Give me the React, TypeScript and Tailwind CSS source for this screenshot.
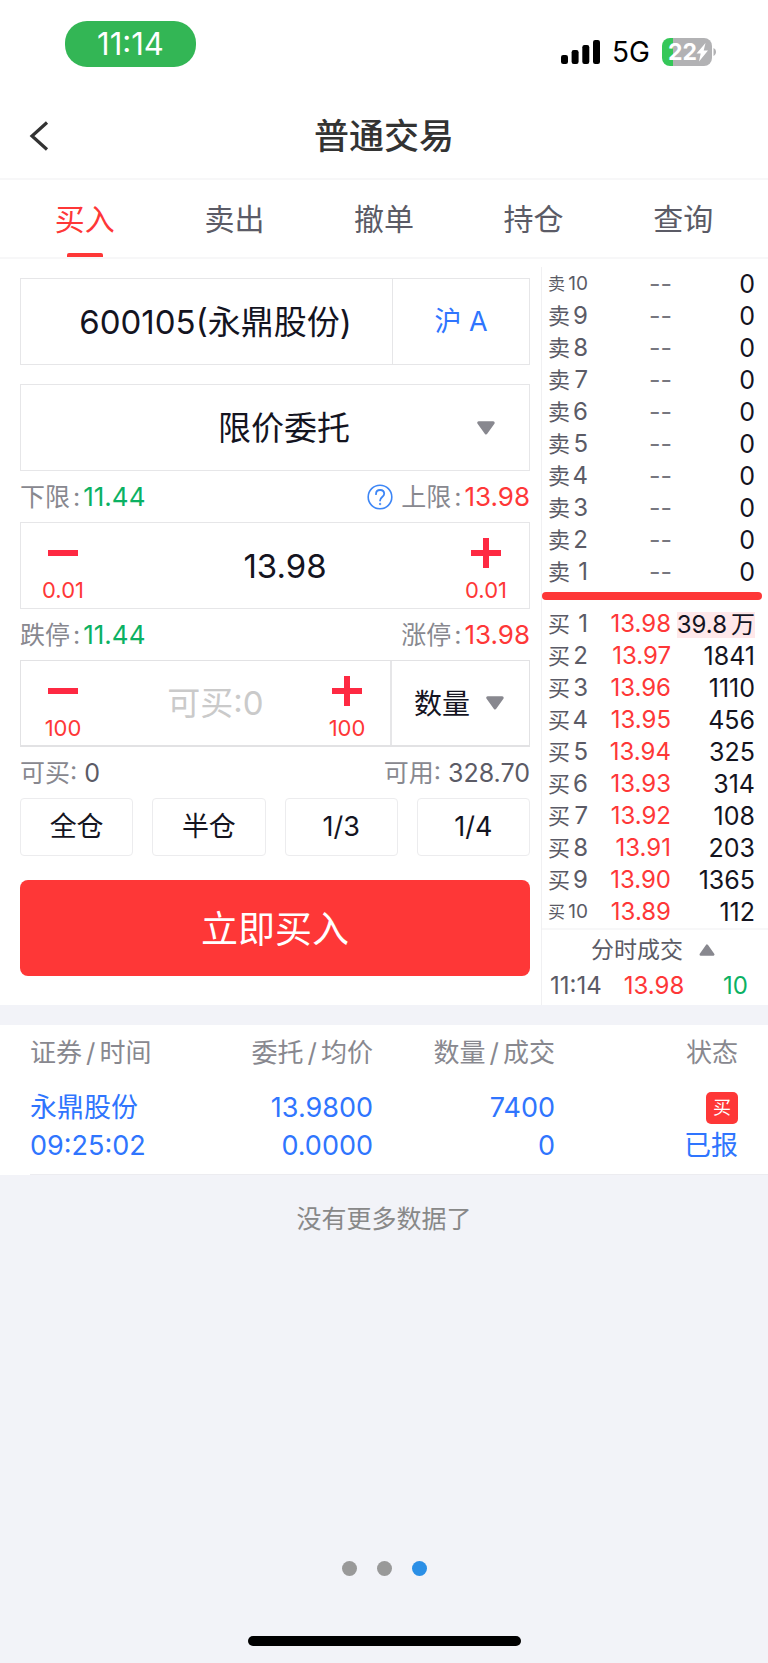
import React, { useState } from 'react';

interface BookRow {
  label: string;
  level: number;
  price: string;
  volume: string;
}

const TABS = ['买入', '卖出', '撤单', '持仓', '查询'];
const POSITIONS = ['全仓', '半仓', '1/3', '1/4'];

const SELL_ROWS: BookRow[] = [10, 9, 8, 7, 6, 5, 4, 3, 2, 1].map((level) => ({
  label: '卖',
  level,
  price: '--',
  volume: '0',
}));

const BUY_ROWS: BookRow[] = [
  { label: '买', level: 1, price: '13.98', volume: '39.8万' },
  { label: '买', level: 2, price: '13.97', volume: '1841' },
  { label: '买', level: 3, price: '13.96', volume: '1110' },
  { label: '买', level: 4, price: '13.95', volume: '456' },
  { label: '买', level: 5, price: '13.94', volume: '325' },
  { label: '买', level: 6, price: '13.93', volume: '314' },
  { label: '买', level: 7, price: '13.92', volume: '108' },
  { label: '买', level: 8, price: '13.91', volume: '203' },
  { label: '买', level: 9, price: '13.90', volume: '1365' },
  { label: '买', level: 10, price: '13.89', volume: '112' },
];

const Triangle: React.FC<{ className?: string }> = ({ className }) => (
  <svg viewBox="0 0 18 14" className={className} aria-hidden="true">
    <path d="M1.8 1.8h14.4L9 12z" fill="#88888f" stroke="#88888f" strokeWidth="3" strokeLinejoin="round" />
  </svg>
);

const StatusBar: React.FC = () => (
  <div className="flex h-[90px] items-start justify-between pl-[65px] pr-[52px]">
    <div className="mt-[21px] flex h-[46px] w-[131px] items-center justify-center rounded-[22px] bg-[#33b655] text-[31px] leading-8 text-white">
      11:14
    </div>
    <div className="mt-[34px] flex h-9 items-center">
      <svg viewBox="0 0 39 24" className="h-6 w-[39px]" aria-hidden="true">
        <rect x="0" y="15" width="7" height="9" rx="2.2" />
        <rect x="10.6" y="10" width="7" height="14" rx="2.2" />
        <rect x="21.3" y="5" width="7" height="19" rx="2.2" />
        <rect x="32" y="0" width="7" height="24" rx="2.2" />
      </svg>
      <span className="ml-3 text-[28px] leading-8 text-black">5G</span>
      <div className="relative ml-3 h-7 w-[54px]">
        <svg viewBox="0 0 54 28" className="h-7 w-[54px]" aria-hidden="true">
          <path d="M8 0h3v28H8a8 8 0 0 1-8-8V8a8 8 0 0 1 8-8z" fill="#35c759" />
          <path d="M11 0h31a8 8 0 0 1 8 8v12a8 8 0 0 1-8 8H11z" fill="#b2b2b4" />
          <path d="M51.5 10c1.6.8 2.5 2.2 2.5 4s-.9 3.2-2.5 4z" fill="#b2b2b4" />
          <path d="M43.5 5 34.5 15.5h4.2L37 23.5l9-11h-4.3z" fill="#fff" />
        </svg>
        <span className="absolute left-[6px] top-0 text-[23px] font-bold leading-7 text-white">22</span>
      </div>
    </div>
  </div>
);

interface StepButtonProps {
  step: string;
  plus?: boolean;
  onClick: () => void;
}

const StepButton: React.FC<StepButtonProps> = ({ step, plus = false, onClick }) => (
  <button
    type="button"
    onClick={onClick}
    aria-label={`${plus ? '增加' : '减少'} ${step}`}
    className={`flex shrink-0 flex-col items-center pt-[15px] text-[#fe3737] ${plus ? 'w-[86px]' : 'w-[84px]'}`}
  >
    <svg viewBox="0 0 30 30" className="size-[30px]" fill="#fe2942" aria-hidden="true">
      <rect x="0" y="12" width="30" height="6" />
      {plus && <rect x="12" y="0" width="6" height="30" />}
    </svg>
    <span className="mt-2 text-[22px] leading-7">{step}</span>
  </button>
);

interface LimitProps {
  label: string;
  value: string;
  valueClass: string;
}

const Limit: React.FC<LimitProps> = ({ label, value, valueClass }) => (
  <span className="flex">
    {label}
    <span className="mx-[3px]">:</span>
    <span className={`text-[26px] ${valueClass}`}>{value}</span>
  </span>
);

const PairHeading: React.FC<{ first: string; second: string }> = ({ first, second }) => (
  <>
    {first}
    <span className="mx-1">/</span>
    {second}
  </>
);

const BookTable: React.FC<{ rows: BookRow[]; caption: string }> = ({ rows, caption }) => (
  <table className="w-full table-fixed whitespace-nowrap" aria-label={caption}>
    <tbody>
      {rows.map((row) => (
        <tr key={row.level} className="h-8">
          <th scope="row" className="w-[46px] p-0 pl-[6px] font-normal text-[#5b5b66]">
            {row.level === 10 ? (
              <span className="flex items-center justify-between text-[19px] leading-8">
                <span className="text-[17px]">{row.label}</span>
                {row.level}
              </span>
            ) : (
              <span className="flex items-center justify-between text-[24px] leading-8">
                <span className="text-[22px]">{row.label}</span>
                {row.level}
              </span>
            )}
          </th>
          {row.price === '--' ? (
            <td className="p-0 pl-[61px] text-left text-[25px] leading-8 text-[#77777f]">--</td>
          ) : (
            <td className="p-0 text-right text-[24px] leading-8 text-[#fe3737]">{row.price}</td>
          )}
          <td className="w-[97px] p-0 pr-[13px] text-right text-[25px] leading-8 text-[#14141f]">
            {row.volume.endsWith('万') ? (
              <span className="inline-block bg-[#ffe8ea] text-[24px] leading-[26px]">
                {row.volume.slice(0, -1)}
                <span className="ml-1">万</span>
              </span>
            ) : (
              row.volume
            )}
          </td>
        </tr>
      ))}
    </tbody>
  </table>
);

const OrderForm: React.FC = () => {
  const [code, setCode] = useState('600105(永鼎股份)');
  const [price, setPrice] = useState('13.98');
  const [amount, setAmount] = useState('');

  const changePrice = (diff: number) => setPrice((Number(price) + diff).toFixed(2));
  const changeAmount = (diff: number) => setAmount(String(Math.max(0, Number(amount) + diff)));

  return (
    <form className="pb-[29px] pl-5 pr-[11px] pt-[19px]" onSubmit={(e) => e.preventDefault()}>
      <div className="flex h-[87px] border border-[#e6e6e8]">
        <input
          aria-label="证券代码"
          value={code}
          onChange={(e) => setCode(e.target.value)}
          className="min-w-0 flex-1 pl-[18px] pt-[2px] text-center text-[33px] text-[#14141f] outline-none"
        />
        <button type="button" className="w-[137px] border-l border-[#e6e6e8] pt-[2px] text-[27px] text-[#2f75fe]">
          沪 A
        </button>
      </div>

      <div className="mt-[19px] flex h-[87px] items-center border border-[#e6e6e8]">
        <select
          aria-label="委托方式"
          className="h-full min-w-0 flex-1 appearance-none pl-[74px] pt-[2px] text-center text-[33px] text-[#14141f] outline-none [text-align-last:center]"
        >
          <option>限价委托</option>
        </select>
        <Triangle className="ml-1 mr-[34px] h-[14px] w-[18px]" />
      </div>

      <div className="flex h-[51px] items-center justify-between text-[25px] leading-8 text-[#88888f]">
        <Limit label="下限" value="11.44" valueClass="text-[#0bb163]" />
        <span className="flex items-center">
          <button type="button" aria-label="说明" className="mr-2">
            <svg viewBox="0 0 26 26" className="size-[26px]" fill="none" stroke="#3d86f6" aria-hidden="true">
              <circle cx="13" cy="13" r="11.8" strokeWidth="1.6" />
              <path
                d="M9 10.2c0-2.5 1.7-4.2 4.1-4.2s4.1 1.6 4.1 3.8c0 3.2-4.1 3.3-4.1 6.7"
                strokeWidth="1.8"
                strokeLinecap="round"
              />
              <circle cx="13.1" cy="20" r="0.8" fill="#3d86f6" strokeWidth="0.8" />
            </svg>
          </button>
          <Limit label="上限" value="13.98" valueClass="text-[#fe3737]" />
        </span>
      </div>

      <div className="flex h-[87px] border border-[#e6e6e8]">
        <StepButton step="0.01" onClick={() => changePrice(-0.01)} />
        <input
          aria-label="委托价格"
          value={price}
          onChange={(e) => setPrice(e.target.value)}
          className="min-w-0 flex-1 pl-[22px] pt-[2px] text-center text-[33px] text-[#14141f] outline-none"
        />
        <StepButton step="0.01" plus onClick={() => changePrice(0.01)} />
      </div>

      <div className="flex h-[51px] items-center justify-between text-[25px] leading-8 text-[#88888f]">
        <Limit label="跌停" value="11.44" valueClass="text-[#0bb163]" />
        <Limit label="涨停" value="13.98" valueClass="text-[#fe3737]" />
      </div>

      <div className="flex h-[87px] border border-b-2 border-[#e2e2e4]">
        <StepButton step="100" onClick={() => changeAmount(-100)} />
        <input
          aria-label="委托数量"
          placeholder="可买:0"
          value={amount}
          onChange={(e) => setAmount(e.target.value)}
          className="min-w-0 flex-1 pl-[22px] pt-[2px] text-center text-[33px] text-[#14141f] outline-none placeholder:text-[#cacaca]"
        />
        <StepButton step="100" plus onClick={() => changeAmount(100)} />
        <div className="flex w-[139px] items-center border-l-2 border-[#e6e6e8] pl-[22px]">
          <select
            aria-label="委托单位"
            className="h-full w-[64px] appearance-none pt-[2px] text-[28px] text-[#14141f] outline-none"
          >
            <option>数量</option>
          </select>
          <Triangle className="ml-2 h-[14px] w-[18px]" />
        </div>
      </div>

      <div className="flex h-[51px] items-center justify-between text-[25px] leading-8 text-[#88888f]">
        <span>
          可买: <span className="text-[#5b5b66]">0</span>
        </span>
        <span>
          可用: <span className="text-[#5b5b66]">328.70</span>
        </span>
      </div>

      <div className="grid grid-cols-4 gap-[19px]">
        {POSITIONS.map((position) => (
          <button
            key={position}
            type="button"
            className="h-[58px] rounded-[4px] border border-[#ececee] text-[27px] leading-8 text-[#14141f]"
          >
            {position}
          </button>
        ))}
      </div>

      <button type="submit" className="mt-6 h-24 w-full rounded-[8px] bg-[#fe3737] pt-1 text-[37px] text-white">
        立即买入
      </button>
    </form>
  );
};

const App: React.FC = () => {
  const [activeTab, setActiveTab] = useState(TABS[0]);

  return (
    <div className="flex min-h-screen flex-col bg-[#f2f3f8] font-['Inter','Noto_Sans_CJK_SC',sans-serif]">
      <div className="bg-white">
        <StatusBar />

        <header className="grid h-[90px] grid-cols-[80px_1fr_80px] items-center border-b-2 border-[#f7f7f8] pt-1">
          <button type="button" aria-label="返回" className="pl-[29px]">
            <svg viewBox="0 0 20 30" className="h-[30px] w-5" fill="none" stroke="#333" strokeWidth="3.2" aria-hidden="true">
              <path d="M18 1.5 3 15l15 13.5" />
            </svg>
          </button>
          <h1 className="text-center text-[35px] font-medium leading-10 text-[#333]">普通交易</h1>
        </header>

        <nav className="flex h-[79px] border-b-2 border-[#f7f7f8] px-[10px]">
          {TABS.map((tab) => (
            <button
              key={tab}
              type="button"
              onClick={() => setActiveTab(tab)}
              className={`flex flex-1 flex-col items-center text-[30px] ${
                tab === activeTab ? 'text-[#fe3737]' : 'text-[#5b5b66]'
              }`}
            >
              <span className="flex flex-1 items-center pt-[6px]">{tab}</span>
              <span className={`h-1 w-9 rounded-t-[2px] ${tab === activeTab ? 'bg-[#fe3737]' : ''}`} />
            </button>
          ))}
        </nav>

        <div className="grid grid-cols-[minmax(0,541fr)_minmax(0,227fr)]">
          <OrderForm />

          <aside className="mt-2 border-l border-[#f0f0f2] pt-px">
            <BookTable rows={SELL_ROWS} caption="卖盘" />
            <div className="mb-2 mr-[6px] mt-1 h-2 rounded-full bg-[#fe3737]" />
            <BookTable rows={BUY_ROWS} caption="买盘" />
            <button
              type="button"
              className="flex h-[42px] w-full items-center justify-center border-t-2 border-[#f7f7f8] pr-1 text-[23px] leading-8 text-[#5b5b66]"
            >
              分时成交
              <Triangle className="ml-4 h-3 w-4 rotate-180" />
            </button>
            <div className="flex h-8 items-center text-[24px] leading-8 text-[#5b5b66]">
              <span className="ml-2">11:14</span>
              <span className="ml-[22px] text-[#fe3737]">13.98</span>
              <span className="ml-auto mr-5 text-[#0bb163]">10</span>
            </div>
          </aside>
        </div>
      </div>

      <div className="mt-5 bg-white pl-[30px]">
        <table className="w-full table-fixed border-b border-[#ececf0] text-right text-[27px]">
          <thead className="text-[26px] text-[#88888f]">
            <tr className="h-[53px]">
              <th className="w-[163px] p-0 pt-[2px] text-left font-normal">
                <PairHeading first="证券" second="时间" />
              </th>
              <th className="w-[180px] p-0 pt-[2px] font-normal">
                <PairHeading first="委托" second="均价" />
              </th>
              <th className="w-[182px] p-0 pt-[2px] font-normal">
                <PairHeading first="数量" second="成交" />
              </th>
              <th className="p-0 pr-[30px] pt-[2px] font-normal">状态</th>
            </tr>
          </thead>
          <tbody className="leading-[38px] text-[#2f75fe]">
            <tr>
              <td className="px-0 pb-[9px] pt-[11px] text-left">
                <div>永鼎股份</div>
                <div>09:25:02</div>
              </td>
              <td className="px-0 pb-[9px] pt-[11px]">
                <div>13.9800</div>
                <div>0.0000</div>
              </td>
              <td className="px-0 pb-[9px] pt-[11px]">
                <div>7400</div>
                <div>0</div>
              </td>
              <td className="pb-[9px] pl-0 pr-[30px] pt-[11px]">
                <div className="flex h-[38px] items-center justify-end">
                  <span className="flex size-8 items-center justify-center rounded-[5px] bg-[#fe3737] text-[18px] text-white">
                    买
                  </span>
                </div>
                <div>已报</div>
              </td>
            </tr>
          </tbody>
        </table>
      </div>

      <p className="mt-7 text-center text-[25px] leading-8 text-[#888]">没有更多数据了</p>

      <footer className="mt-auto flex flex-col items-center pb-[17px]">
        <div className="flex gap-5">
          <span className="size-[15px] rounded-full bg-[#999]" />
          <span className="size-[15px] rounded-full bg-[#999]" />
          <span className="size-[15px] rounded-full bg-[#2b8fe6]" />
        </div>
        <div className="mt-[60px] h-[10px] w-[273px] rounded-full bg-black" />
      </footer>
    </div>
  );
};

export default App;
